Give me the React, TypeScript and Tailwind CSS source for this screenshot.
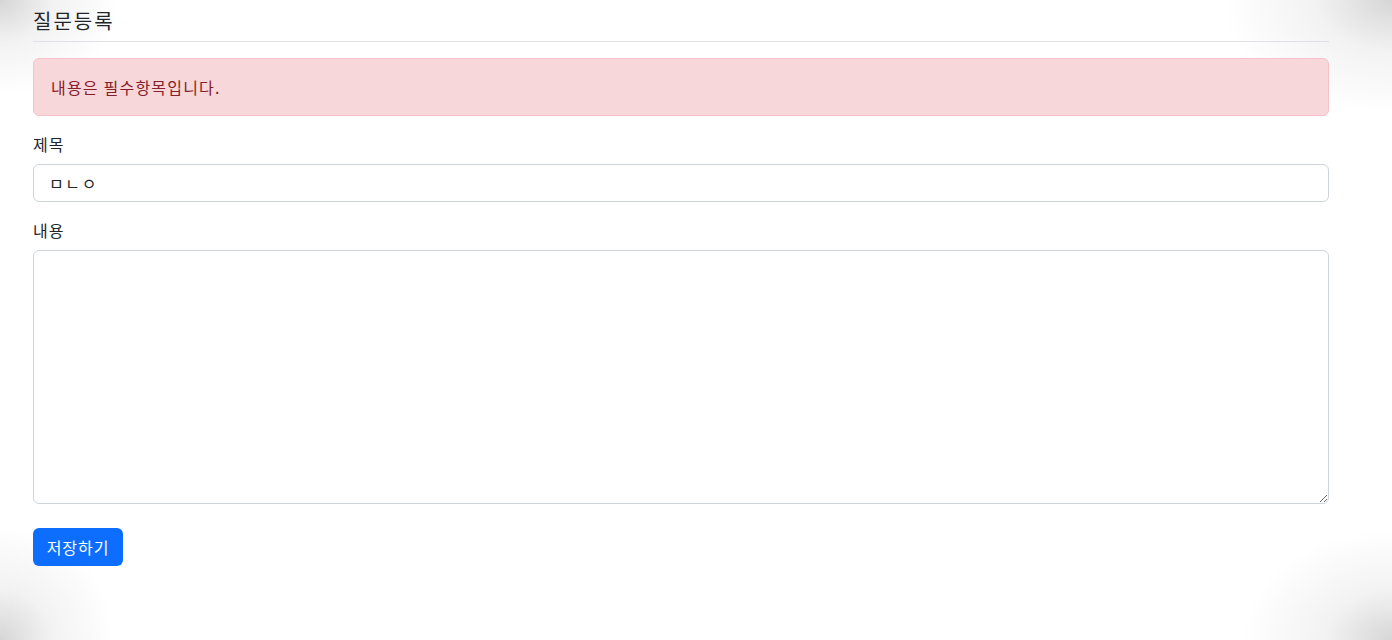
import React from "react";

export default function App() {
  return (
    <div
      className="min-h-screen w-full bg-white bg-[radial-gradient(ellipse_120px_95px_at_0_0,#d6d6d6,rgba(230,230,230,0.5)_45%,rgba(255,255,255,0)_100%),radial-gradient(ellipse_170px_115px_at_100%_0,#d6d6d6,rgba(230,230,230,0.5)_45%,rgba(255,255,255,0)_100%),radial-gradient(ellipse_115px_115px_at_0_100%,#d6d6d6,rgba(230,230,230,0.5)_45%,rgba(255,255,255,0)_100%),radial-gradient(ellipse_150px_110px_at_100%_100%,#d6d6d6,rgba(230,230,230,0.5)_45%,rgba(255,255,255,0)_100%)] text-[#212529]"
      style={{ fontFamily: '"Noto Sans CJK KR", "Noto Sans", sans-serif' }}
    >
      <div className="ml-[33px] w-[1296px] pt-[9px]">
        <h5 className="border-b border-[#dee2e6] pb-[8px] text-[20px] leading-[24px] font-normal tracking-[0.1em]">질문등록</h5>
        <div className="mt-[16px] rounded-[6px] border border-[#f5c2c7] bg-[#f8d7da] px-[17px] py-[16px] text-[16px] leading-[24px] text-[#842029] tracking-[0.075em]">
          내용은 필수항목입니다.
        </div>
        <form className="mt-[16px]" onSubmit={(e) => e.preventDefault()}>
          <div className="mb-[16px]">
            <label className="mb-[8px] block text-[16px] leading-[24px] tracking-[0.07em]">제목</label>
            <input
              type="text"
              defaultValue="ㅁㄴㅇ"
              className="block h-[38px] w-full rounded-[6px] border border-[#ced4da] bg-white px-[15px] py-[6px] text-[16px] leading-[24px] text-[#212529] outline-none tracking-[0.1em]"
            />
          </div>
          <div className="mb-[24px]">
            <label className="mb-[8px] block text-[16px] leading-[24px] tracking-[0.07em]">내용</label>
            <textarea
              rows={10}
              className="block h-[254px] w-full rounded-[6px] border border-[#ced4da] bg-white px-[12px] py-[6px] text-[16px] leading-[24px] outline-none"
            />
          </div>
          <button
            type="submit"
            className="h-[38px] w-[90px] rounded-[6px] bg-[#0d6efd] text-[16px] leading-[24px] text-white tracking-[0.06em]"
          >
            저장하기
          </button>
        </form>
      </div>
    </div>
  );
}
